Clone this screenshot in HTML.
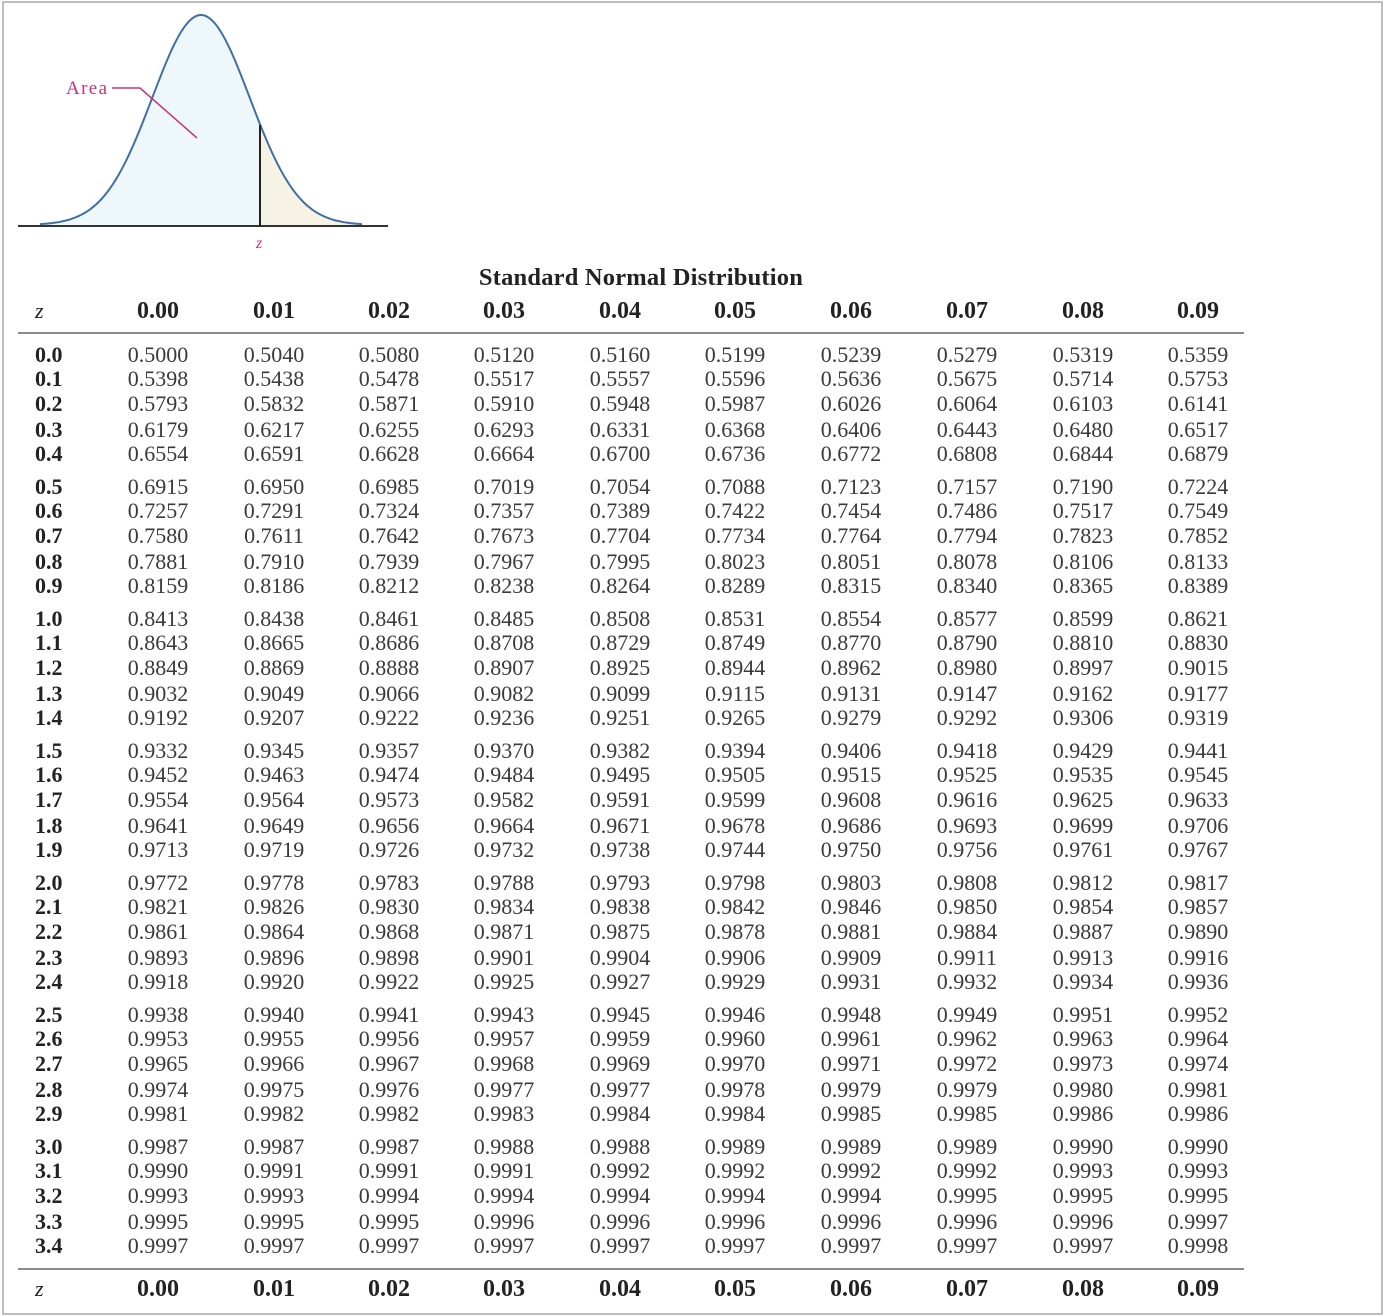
<!DOCTYPE html>
<html><head><meta charset="utf-8"><style>
html,body{margin:0;padding:0;background:#fff;}
body{width:1386px;height:1316px;position:relative;overflow:hidden;font-family:"Liberation Serif",serif;color:#3a3a3a;}
.frame{position:absolute;left:2px;top:1px;width:1377px;height:1310px;border:2px solid #bdbdbd;}
.r{position:absolute;left:0;width:1300px;height:24px;line-height:24px;font-size:22px;}
.r span{position:absolute;top:0;width:116px;text-align:center;margin-left:-58px;}
.r span.z{left:35px;margin-left:0;text-align:left;font-weight:bold;color:#222;}
.h{font-weight:bold;color:#222;font-size:24px;}
.h span.z{font-style:italic;font-weight:normal;font-size:22px;}
.r span:nth-child(2){left:158px}.r span:nth-child(3){left:274px}.r span:nth-child(4){left:389px}
.r span:nth-child(5){left:504px}.r span:nth-child(6){left:620px}.r span:nth-child(7){left:735px}
.r span:nth-child(8){left:851px}.r span:nth-child(9){left:967px}.r span:nth-child(10){left:1083px}
.r span:nth-child(11){left:1198px}
.line{position:absolute;left:18px;width:1226px;height:2px;background:#8a8a8a;}
.title{position:absolute;left:0;width:1282px;text-align:center;top:264px;font-size:24.5px;font-weight:bold;color:#222;letter-spacing:0.2px;}
</style></head><body>
<div class="frame"></div>
<svg width="400" height="260" style="position:absolute;left:0;top:0">
<path id="fillL" fill="#eef7fa" d=""/>
<path id="fillR" fill="#f6f3e4" d=""/>
<path id="curve" fill="none" stroke="#3f6fa6" stroke-width="2" d=""/>
<line x1="18" y1="226" x2="388" y2="226" stroke="#333" stroke-width="2"/>
<line x1="260" y1="125" x2="260" y2="226" stroke="#222" stroke-width="2"/>
<polyline points="112,88 140,88 197,138" fill="none" stroke="#c8337a" stroke-width="1.5"/>
<text x="66" y="94" font-family="Liberation Serif, serif" font-size="19" fill="#c8337a" textLength="41">Area</text>
<text x="256" y="248" font-family="Liberation Serif, serif" font-style="italic" font-size="16" fill="#c8337a">z</text>
</svg>
<script>
(function(){var s=48.7,c=201,b=225,h=210;function y(x){return b-h*Math.exp(-(x-c)*(x-c)/(2*s*s));}
var d="",l="M40,225",r="M260,225";for(var x=40;x<=362;x+=2){var p=x.toFixed(0)+","+y(x).toFixed(1);d+=(x==40?"M":"L")+p;if(x<=260)l+="L"+p;if(x>=260)r+="L"+p;}
l+="L260,"+y(260).toFixed(1)+"L260,225Z";r+="L362,225Z";
document.getElementById("curve").setAttribute("d",d);document.getElementById("fillL").setAttribute("d",l);document.getElementById("fillR").setAttribute("d",r);})();
</script>
<div class="title">Standard Normal Distribution</div>
<div class="r h" style="top:299px"><span class="z">z</span><span>0.00</span><span>0.01</span><span>0.02</span><span>0.03</span><span>0.04</span><span>0.05</span><span>0.06</span><span>0.07</span><span>0.08</span><span>0.09</span></div>
<div class="line" style="top:332px"></div>

<div class="r" style="top:343px"><span class="z">0.0</span><span>0.5000</span><span>0.5040</span><span>0.5080</span><span>0.5120</span><span>0.5160</span><span>0.5199</span><span>0.5239</span><span>0.5279</span><span>0.5319</span><span>0.5359</span></div>
<div class="r" style="top:367px"><span class="z">0.1</span><span>0.5398</span><span>0.5438</span><span>0.5478</span><span>0.5517</span><span>0.5557</span><span>0.5596</span><span>0.5636</span><span>0.5675</span><span>0.5714</span><span>0.5753</span></div>
<div class="r" style="top:392px"><span class="z">0.2</span><span>0.5793</span><span>0.5832</span><span>0.5871</span><span>0.5910</span><span>0.5948</span><span>0.5987</span><span>0.6026</span><span>0.6064</span><span>0.6103</span><span>0.6141</span></div>
<div class="r" style="top:418px"><span class="z">0.3</span><span>0.6179</span><span>0.6217</span><span>0.6255</span><span>0.6293</span><span>0.6331</span><span>0.6368</span><span>0.6406</span><span>0.6443</span><span>0.6480</span><span>0.6517</span></div>
<div class="r" style="top:442px"><span class="z">0.4</span><span>0.6554</span><span>0.6591</span><span>0.6628</span><span>0.6664</span><span>0.6700</span><span>0.6736</span><span>0.6772</span><span>0.6808</span><span>0.6844</span><span>0.6879</span></div>

<div class="r" style="top:475px"><span class="z">0.5</span><span>0.6915</span><span>0.6950</span><span>0.6985</span><span>0.7019</span><span>0.7054</span><span>0.7088</span><span>0.7123</span><span>0.7157</span><span>0.7190</span><span>0.7224</span></div>
<div class="r" style="top:499px"><span class="z">0.6</span><span>0.7257</span><span>0.7291</span><span>0.7324</span><span>0.7357</span><span>0.7389</span><span>0.7422</span><span>0.7454</span><span>0.7486</span><span>0.7517</span><span>0.7549</span></div>
<div class="r" style="top:524px"><span class="z">0.7</span><span>0.7580</span><span>0.7611</span><span>0.7642</span><span>0.7673</span><span>0.7704</span><span>0.7734</span><span>0.7764</span><span>0.7794</span><span>0.7823</span><span>0.7852</span></div>
<div class="r" style="top:550px"><span class="z">0.8</span><span>0.7881</span><span>0.7910</span><span>0.7939</span><span>0.7967</span><span>0.7995</span><span>0.8023</span><span>0.8051</span><span>0.8078</span><span>0.8106</span><span>0.8133</span></div>
<div class="r" style="top:574px"><span class="z">0.9</span><span>0.8159</span><span>0.8186</span><span>0.8212</span><span>0.8238</span><span>0.8264</span><span>0.8289</span><span>0.8315</span><span>0.8340</span><span>0.8365</span><span>0.8389</span></div>

<div class="r" style="top:607px"><span class="z">1.0</span><span>0.8413</span><span>0.8438</span><span>0.8461</span><span>0.8485</span><span>0.8508</span><span>0.8531</span><span>0.8554</span><span>0.8577</span><span>0.8599</span><span>0.8621</span></div>
<div class="r" style="top:631px"><span class="z">1.1</span><span>0.8643</span><span>0.8665</span><span>0.8686</span><span>0.8708</span><span>0.8729</span><span>0.8749</span><span>0.8770</span><span>0.8790</span><span>0.8810</span><span>0.8830</span></div>
<div class="r" style="top:656px"><span class="z">1.2</span><span>0.8849</span><span>0.8869</span><span>0.8888</span><span>0.8907</span><span>0.8925</span><span>0.8944</span><span>0.8962</span><span>0.8980</span><span>0.8997</span><span>0.9015</span></div>
<div class="r" style="top:682px"><span class="z">1.3</span><span>0.9032</span><span>0.9049</span><span>0.9066</span><span>0.9082</span><span>0.9099</span><span>0.9115</span><span>0.9131</span><span>0.9147</span><span>0.9162</span><span>0.9177</span></div>
<div class="r" style="top:706px"><span class="z">1.4</span><span>0.9192</span><span>0.9207</span><span>0.9222</span><span>0.9236</span><span>0.9251</span><span>0.9265</span><span>0.9279</span><span>0.9292</span><span>0.9306</span><span>0.9319</span></div>

<div class="r" style="top:739px"><span class="z">1.5</span><span>0.9332</span><span>0.9345</span><span>0.9357</span><span>0.9370</span><span>0.9382</span><span>0.9394</span><span>0.9406</span><span>0.9418</span><span>0.9429</span><span>0.9441</span></div>
<div class="r" style="top:763px"><span class="z">1.6</span><span>0.9452</span><span>0.9463</span><span>0.9474</span><span>0.9484</span><span>0.9495</span><span>0.9505</span><span>0.9515</span><span>0.9525</span><span>0.9535</span><span>0.9545</span></div>
<div class="r" style="top:788px"><span class="z">1.7</span><span>0.9554</span><span>0.9564</span><span>0.9573</span><span>0.9582</span><span>0.9591</span><span>0.9599</span><span>0.9608</span><span>0.9616</span><span>0.9625</span><span>0.9633</span></div>
<div class="r" style="top:814px"><span class="z">1.8</span><span>0.9641</span><span>0.9649</span><span>0.9656</span><span>0.9664</span><span>0.9671</span><span>0.9678</span><span>0.9686</span><span>0.9693</span><span>0.9699</span><span>0.9706</span></div>
<div class="r" style="top:838px"><span class="z">1.9</span><span>0.9713</span><span>0.9719</span><span>0.9726</span><span>0.9732</span><span>0.9738</span><span>0.9744</span><span>0.9750</span><span>0.9756</span><span>0.9761</span><span>0.9767</span></div>

<div class="r" style="top:871px"><span class="z">2.0</span><span>0.9772</span><span>0.9778</span><span>0.9783</span><span>0.9788</span><span>0.9793</span><span>0.9798</span><span>0.9803</span><span>0.9808</span><span>0.9812</span><span>0.9817</span></div>
<div class="r" style="top:895px"><span class="z">2.1</span><span>0.9821</span><span>0.9826</span><span>0.9830</span><span>0.9834</span><span>0.9838</span><span>0.9842</span><span>0.9846</span><span>0.9850</span><span>0.9854</span><span>0.9857</span></div>
<div class="r" style="top:920px"><span class="z">2.2</span><span>0.9861</span><span>0.9864</span><span>0.9868</span><span>0.9871</span><span>0.9875</span><span>0.9878</span><span>0.9881</span><span>0.9884</span><span>0.9887</span><span>0.9890</span></div>
<div class="r" style="top:946px"><span class="z">2.3</span><span>0.9893</span><span>0.9896</span><span>0.9898</span><span>0.9901</span><span>0.9904</span><span>0.9906</span><span>0.9909</span><span>0.9911</span><span>0.9913</span><span>0.9916</span></div>
<div class="r" style="top:970px"><span class="z">2.4</span><span>0.9918</span><span>0.9920</span><span>0.9922</span><span>0.9925</span><span>0.9927</span><span>0.9929</span><span>0.9931</span><span>0.9932</span><span>0.9934</span><span>0.9936</span></div>

<div class="r" style="top:1003px"><span class="z">2.5</span><span>0.9938</span><span>0.9940</span><span>0.9941</span><span>0.9943</span><span>0.9945</span><span>0.9946</span><span>0.9948</span><span>0.9949</span><span>0.9951</span><span>0.9952</span></div>
<div class="r" style="top:1027px"><span class="z">2.6</span><span>0.9953</span><span>0.9955</span><span>0.9956</span><span>0.9957</span><span>0.9959</span><span>0.9960</span><span>0.9961</span><span>0.9962</span><span>0.9963</span><span>0.9964</span></div>
<div class="r" style="top:1052px"><span class="z">2.7</span><span>0.9965</span><span>0.9966</span><span>0.9967</span><span>0.9968</span><span>0.9969</span><span>0.9970</span><span>0.9971</span><span>0.9972</span><span>0.9973</span><span>0.9974</span></div>
<div class="r" style="top:1078px"><span class="z">2.8</span><span>0.9974</span><span>0.9975</span><span>0.9976</span><span>0.9977</span><span>0.9977</span><span>0.9978</span><span>0.9979</span><span>0.9979</span><span>0.9980</span><span>0.9981</span></div>
<div class="r" style="top:1102px"><span class="z">2.9</span><span>0.9981</span><span>0.9982</span><span>0.9982</span><span>0.9983</span><span>0.9984</span><span>0.9984</span><span>0.9985</span><span>0.9985</span><span>0.9986</span><span>0.9986</span></div>

<div class="r" style="top:1135px"><span class="z">3.0</span><span>0.9987</span><span>0.9987</span><span>0.9987</span><span>0.9988</span><span>0.9988</span><span>0.9989</span><span>0.9989</span><span>0.9989</span><span>0.9990</span><span>0.9990</span></div>
<div class="r" style="top:1159px"><span class="z">3.1</span><span>0.9990</span><span>0.9991</span><span>0.9991</span><span>0.9991</span><span>0.9992</span><span>0.9992</span><span>0.9992</span><span>0.9992</span><span>0.9993</span><span>0.9993</span></div>
<div class="r" style="top:1184px"><span class="z">3.2</span><span>0.9993</span><span>0.9993</span><span>0.9994</span><span>0.9994</span><span>0.9994</span><span>0.9994</span><span>0.9994</span><span>0.9995</span><span>0.9995</span><span>0.9995</span></div>
<div class="r" style="top:1210px"><span class="z">3.3</span><span>0.9995</span><span>0.9995</span><span>0.9995</span><span>0.9996</span><span>0.9996</span><span>0.9996</span><span>0.9996</span><span>0.9996</span><span>0.9996</span><span>0.9997</span></div>
<div class="r" style="top:1234px"><span class="z">3.4</span><span>0.9997</span><span>0.9997</span><span>0.9997</span><span>0.9997</span><span>0.9997</span><span>0.9997</span><span>0.9997</span><span>0.9997</span><span>0.9997</span><span>0.9998</span></div>

<div class="line" style="top:1268px"></div>
<div class="r h" style="top:1277px"><span class="z">z</span><span>0.00</span><span>0.01</span><span>0.02</span><span>0.03</span><span>0.04</span><span>0.05</span><span>0.06</span><span>0.07</span><span>0.08</span><span>0.09</span></div>
</body></html>
